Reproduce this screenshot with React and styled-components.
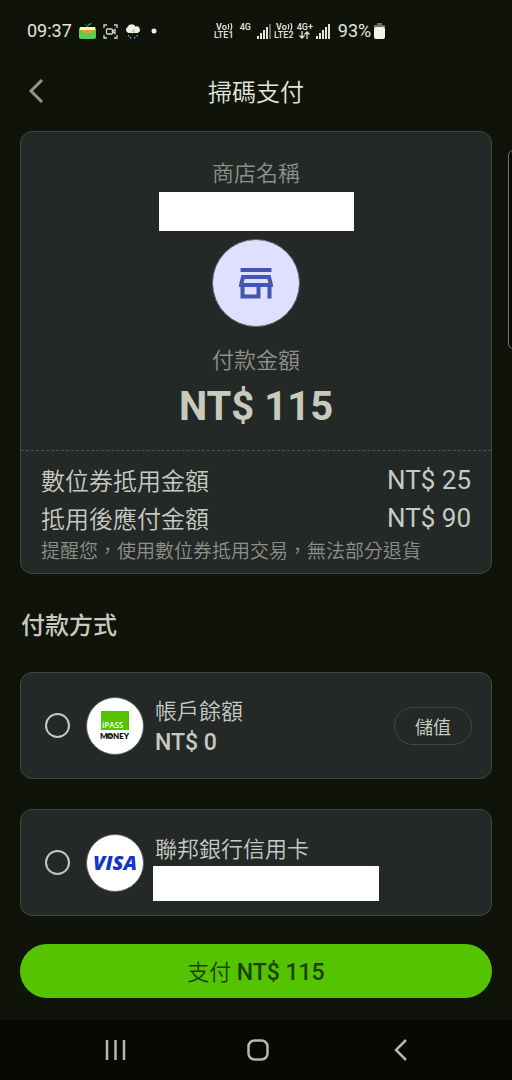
import React from "react";
import styled, { createGlobalStyle } from "styled-components";

const color = {
  page: "#10130a",
  card: "#242827",
  line: "#43483f",
  bright: "#e4e5da",
  text: "#c6cac2",
  soft: "#c8cabd",
  muted: "#8e9189",
  green: "#54c300",
  nav: "#070904",
};

const GlobalStyle = createGlobalStyle`
  *, *::before, *::after { box-sizing: border-box; }
  body {
    margin: 0;
    background: ${color.page};
    color: ${color.text};
    font-family: Roboto, "Noto Sans CJK TC", sans-serif;
  }
  h1, h2, p, dl, dd, dt { margin: 0; font-weight: 400; }
  button { font: inherit; color: inherit; background: none; border: 0; padding: 0; cursor: pointer; }
  svg { display: block; flex: none; }
`;

const Screen = styled.div`
  position: relative;
  display: flex;
  flex-direction: column;
  min-height: 100vh;
  overflow: hidden;
`;

const StatusBar = styled.div`
  display: flex;
  align-items: center;
  height: 62px;
  padding-left: 27px;
  color: ${color.bright};
  font-size: 18px;
  line-height: 20px;
`;

const StatusGroup = styled.div`
  display: flex;
  align-items: center;
  gap: ${(p) => p.$gap}px;
  margin-left: ${(p) => p.$offset || 0}px;
`;

const NetLabel = styled.span`
  display: flex;
  flex-direction: column;
  align-items: center;
  width: ${(p) => p.$width}px;
  height: 16px;
  font-size: 9px;
  font-weight: 500;
  line-height: 8px;
`;

const Header = styled.header`
  display: grid;
  grid-template-columns: 32px 1fr 32px;
  align-items: center;
  height: 62px;
  padding: 0 20px;
`;

const BackButton = styled.button`
  display: flex;
  align-items: center;
  justify-content: center;
  height: 32px;
  padding-bottom: 4px;
`;

const Title = styled.h1`
  color: ${color.bright};
  font-size: 24px;
  font-weight: 350;
  line-height: 32px;
  text-align: center;
`;

const Main = styled.main`
  display: flex;
  flex-direction: column;
  padding: 7px 20px 22px;
`;

const Card = styled.section`
  background: ${color.card};
  border: 1px solid ${color.line};
  border-radius: 12px;
`;

const Merchant = styled.div`
  display: flex;
  flex-direction: column;
  align-items: center;
  padding: 24px 20px 19px;
  border-bottom: 1px dashed #50554d;
`;

const Caption = styled.p`
  color: ${color.muted};
  font-size: 22px;
  font-weight: 350;
  line-height: 36px;
`;

const Redacted = styled.div`
  width: ${(p) => p.$width}px;
  max-width: 100%;
  height: ${(p) => p.$height}px;
  background: #fff;
`;

const StoreBadge = styled.div`
  display: flex;
  align-items: center;
  justify-content: center;
  width: 88px;
  height: 88px;
  margin: 8px 0 16px;
  border: 1px solid #5f6268;
  border-radius: 50%;
  background: #dfe0ff;
`;

const Amount = styled.p`
  color: ${color.soft};
  font-size: 40px;
  font-weight: 700;
  line-height: 48px;
  margin-top: 4px;
`;

const Breakdown = styled.div`
  padding: 12px 20px 8px;
`;

const BreakdownRow = styled.div`
  display: flex;
  justify-content: space-between;
  font-size: 24px;
  line-height: 38px;
  dt { font-weight: 350; }
`;

const Price = styled.dd`
  font-size: 26px;
  line-height: 34px;
`;

const Note = styled.p`
  color: ${color.muted};
  font-size: 19px;
  font-weight: 350;
  line-height: 26px;
`;

const SectionTitle = styled.h2`
  margin: 35px 0 29px 1px;
  color: ${color.soft};
  font-size: 24px;
  font-weight: 500;
  line-height: 34px;
`;

const Methods = styled.div`
  display: flex;
  flex-direction: column;
  gap: 30px;
`;

const Method = styled(Card)`
  display: flex;
  align-items: center;
  height: 107px;
  padding: 0 19px 0 24px;
`;

const MethodLabel = styled.label`
  display: flex;
  flex: 1;
  align-items: center;
`;

const Radio = styled.input`
  appearance: none;
  flex: none;
  width: 25px;
  height: 25px;
  margin: 0 16px 0 0;
  border: 2px solid ${color.soft};
  border-radius: 50%;
  &:checked { box-shadow: inset 0 0 0 4px ${color.card}; background: ${color.green}; }
`;

const Logo = styled.span`
  display: flex;
  flex: none;
  flex-direction: column;
  align-items: center;
  justify-content: center;
  width: 58px;
  height: 58px;
  border: 1px solid #5b5f5a;
  border-radius: 50%;
  background: #fff;
`;

const VisaText = styled.span`
  color: #1434cb;
  font-family: "Open Sans", sans-serif;
  font-size: 20px;
  font-style: italic;
  font-weight: 800;
  line-height: 24px;
`;

const MethodText = styled.span`
  display: flex;
  flex-direction: column;
  padding-top: ${(p) => p.$top}px;
  margin-left: ${(p) => p.$gap}px;
`;

const MethodName = styled.span`
  padding-left: ${(p) => p.$indent || 0}px;
  font-size: 22px;
  font-weight: 350;
  line-height: 32px;
`;

const Balance = styled.span`
  font-size: 23px;
  font-weight: 500;
  line-height: 30px;
`;

const TopUp = styled.button`
  width: 78px;
  height: 38px;
  border: 1px solid ${color.line};
  border-radius: 19px;
  font-size: 18px;
`;

const PayButton = styled.button`
  height: 54px;
  margin-top: 28px;
  padding-top: 4px;
  border-radius: 27px;
  background: ${color.green};
  color: #1d4204;
  font-size: 22px;
  font-weight: 350;
  line-height: 32px;
  b { font-size: 23px; font-weight: 500; }
`;

const NavBar = styled.nav`
  display: grid;
  grid-template-columns: repeat(3, 28%);
  justify-content: center;
  height: 60px;
  margin-top: auto;
  padding-left: 4px;
  background: ${color.nav};
`;

const NavButton = styled.button`
  display: flex;
  align-items: center;
  justify-content: center;
`;

const EdgeHandle = styled.div`
  position: absolute;
  top: 150px;
  right: -8px;
  width: 12px;
  height: 199px;
  border: 1px solid #73766f;
  border-radius: 5px;
  background: #090b05;
`;

function Signal({ weak }) {
  return (
    <svg width="14" height="16" viewBox="0 0 14 16" fill="currentColor">
      <path d="M0 13h2v3H0zM3 10h2v6H3zM6 7h2v9H6zM9 4h2v12H9z" />
      <path d="M12 1h2v15h-2z" opacity={weak ? 0.4 : 1} />
    </svg>
  );
}

function PouchIcon() {
  return (
    <svg width="17" height="16" viewBox="0 0 17 16">
      <path d="M5 1Q8 1 8 4Q9 0 13 0Q12 2 9 3V5H7.500Q8 2 5 1Z" fill="#3ba64a" />
      <rect y="4" width="17" height="12" rx="2" fill="#57cf50" />
      <path d="M1 4h15v3H1z" fill="#f3f4d1" />
      <path d="M2 7h13q-1 3-6.500 3T2 7z" fill="#f59b20" />
    </svg>
  );
}

function CaptureIcon() {
  return (
    <svg width="15" height="15" viewBox="0 0 15 15" fill="none" stroke="#d6d8ce" strokeWidth="1.300">
      <path d="M1 4V1h3M11 1h3v3M14 11v3h-3M4 14H1v-3" />
      <rect x="3.500" y="5" width="6" height="5" rx="1" />
      <path d="M9.500 7.500l2.500-2v4z" />
    </svg>
  );
}

function StormIcon() {
  return (
    <svg width="16" height="15" viewBox="0 0 16 15">
      <path d="M3.500 9A3.300 3.300 0 0 1 2.500 3 4.500 4.500 0 0 1 10.500 2.500 3.400 3.400 0 1 1 12.500 9Z" fill="#eeeeea" />
      <path d="M8.500 5L6.500 8H8L7 10.500l3-3.500H8.500l1.500-2z" fill="#efc51c" />
      <path d="M4 11l-.7 1.500M6 13l-.6 1.500M10 13l-.6 1.500M12.500 11l-.7 1.500" stroke="#53a9e8" strokeWidth="1.200" />
    </svg>
  );
}

function VolteIcon() {
  return (
    <svg width="18" height="8" viewBox="0 0 18 8" fill="none" stroke="currentColor">
      <text x="1" y="7" fill="currentColor" stroke="none" fontSize="9" fontWeight="600">Vo</text>
      <path d="M13 1q1.500 2.500 0 5.500M15.500 0q2.500 3.500 0 7.500" strokeWidth="1.200" />
    </svg>
  );
}

function StoreIcon() {
  return (
    <svg width="34" height="32" viewBox="0 0 34 32" fill="none" stroke="#4256ae" strokeWidth="4">
      <path d="M1.500 3h31" />
      <path d="M4 10h26l2 8H2zM3.500 18v11.500h16V18M30.500 18v13.500" />
    </svg>
  );
}

function IPassLogo() {
  return (
    <svg width="30" height="30" viewBox="0 0 30 30" fontFamily="Open Sans, sans-serif">
      <rect width="28" height="19" x="1" y="0" fill="#54c300" />
      <text x="2" y="17" fill="#fff" fontSize="8" fontWeight="600">iPASS</text>
      <g fill="#111" fontFamily="Lato, sans-serif" fontSize="8" fontWeight="800">
        <text x="0" y="28">M</text>
        <text x="13" y="28">NEY</text>
      </g>
      <circle cx="10" cy="25" r="2.300" fill="#69a9d8" stroke="#111" strokeWidth="1.500" />
      <circle cx="11" cy="25.500" r="1" fill="#e47d24" />
    </svg>
  );
}

const prices = [
  ["數位券抵用金額", "NT$ 25"],
  ["抵用後應付金額", "NT$ 90"],
];

export default function App() {
  return (
    <Screen>
      <GlobalStyle />
      <StatusBar>
        <span>09:37</span>
        <StatusGroup $gap={7} $offset={7}>
          <PouchIcon />
          <CaptureIcon />
          <StormIcon />
          <svg width="20" height="6" viewBox="0 0 20 6"><circle cx="6" cy="3" r="2.500" fill="#eee" /></svg>
        </StatusGroup>
        <StatusGroup $gap={3} $offset={46}>
          <NetLabel $width={20}><VolteIcon /><span>LTE1</span></NetLabel>
          <NetLabel $width={17}><span>4G</span></NetLabel>
          <Signal weak />
          <NetLabel $width={20}><VolteIcon /><span>LTE2</span></NetLabel>
          <NetLabel $width={16}>
            <span>4G+</span>
            <svg width="11" height="8" viewBox="0 0 11 8" fill="none" stroke="currentColor" strokeWidth="1.300">
              <path d="M3 0v7M.5 4.500L3 7l2.500-2.500M8 8V1M5.500 3.500L8 1l2.500 2.500" />
            </svg>
          </NetLabel>
          <Signal />
        </StatusGroup>
        <StatusGroup $gap={3} $offset={8}>
          <span>93%</span>
          <svg width="11" height="16" viewBox="0 0 11 16">
            <path d="M3 0h5v2h3v3H0V2h3z" fill="#6d6f69" />
            <rect y="4" width="11" height="12" rx="2" fill="#f1f2ec" />
          </svg>
        </StatusGroup>
      </StatusBar>

      <Header>
        <BackButton aria-label="返回">
          <svg width="16" height="26" viewBox="0 0 16 26" fill="none" stroke="#92948c" strokeWidth="3">
            <path d="M14 2L3 13l11 11" />
          </svg>
        </BackButton>
        <Title>掃碼支付</Title>
      </Header>

      <Main>
        <Card>
          <Merchant>
            <Caption>商店名稱</Caption>
            <Redacted $width={195} $height={39} />
            <StoreBadge><StoreIcon /></StoreBadge>
            <Caption>付款金額</Caption>
            <Amount>NT$ 115</Amount>
          </Merchant>
          <Breakdown>
            <dl>
              {prices.map(([name, value]) => (
                <BreakdownRow key={name}>
                  <dt>{name}</dt>
                  <Price>{value}</Price>
                </BreakdownRow>
              ))}
            </dl>
            <Note>提醒您，使用數位券抵用交易，無法部分退貨</Note>
          </Breakdown>
        </Card>

        <SectionTitle>付款方式</SectionTitle>

        <Methods>
          <Method>
            <MethodLabel>
              <Radio type="radio" name="method" value="balance" />
              <Logo><IPassLogo /></Logo>
              <MethodText $gap={11} $top={2}>
                <MethodName>帳戶餘額</MethodName>
                <Balance>NT$ 0</Balance>
              </MethodText>
            </MethodLabel>
            <TopUp>儲值</TopUp>
          </Method>
          <Method>
            <MethodLabel>
              <Radio type="radio" name="method" value="card" />
              <Logo><VisaText>VISA</VisaText></Logo>
              <MethodText $gap={9} $top={9}>
                <MethodName $indent={2}>聯邦銀行信用卡</MethodName>
                <Redacted $width={226} $height={35} />
              </MethodText>
            </MethodLabel>
          </Method>
        </Methods>

        <PayButton>支付 <b>NT$ 115</b></PayButton>
      </Main>

      <NavBar>
        <NavButton aria-label="最近使用">
          <svg width="21" height="22" viewBox="0 0 21 22" stroke="#b5b7b0" strokeWidth="2.500"><path d="M2 1v20M10.500 1v20M19 1v20" /></svg>
        </NavButton>
        <NavButton aria-label="主畫面">
          <svg width="22" height="22" viewBox="0 0 22 22" fill="none" stroke="#b5b7b0" strokeWidth="2.500"><rect x="1.500" y="1.500" width="19" height="19" rx="6" /></svg>
        </NavButton>
        <NavButton aria-label="上一頁">
          <svg width="13" height="22" viewBox="0 0 13 22" fill="none" stroke="#b5b7b0" strokeWidth="2.500"><path d="M12 1L2 11l10 10" /></svg>
        </NavButton>
      </NavBar>
      <EdgeHandle />
    </Screen>
  );
}
